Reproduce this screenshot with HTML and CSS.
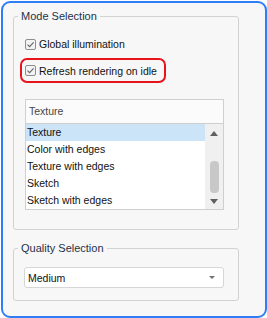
FILE: index.html
```html
<!DOCTYPE html>
<html lang="en">
<head>
    <meta charset="UTF-8">
    <title>Render Settings</title>
    <link rel="stylesheet" href="styles.css">
</head>
<body>
    <div class="panel">
        <!-- Mode selection -->
        <fieldset class="group mode-group">
            <legend>Mode Selection</legend>
            <div class="check-row">
                <svg class="check" width="11" height="11" viewBox="0 0 11 11"><rect x="0.5" y="0.5" width="10" height="10" rx="1.5" fill="#f3f3f3" stroke="#8e8e8e"/><path d="M2.5 5.6 L4.6 7.7 L8.6 3.3" fill="none" stroke="#6a6a6a" stroke-width="1.2"/></svg>
                <span>Global illumination</span>
            </div>
            <div class="check-row highlight">
                <svg class="check" width="11" height="11" viewBox="0 0 11 11"><rect x="0.5" y="0.5" width="10" height="10" rx="1.5" fill="#f3f3f3" stroke="#8e8e8e"/><path d="M2.5 5.6 L4.6 7.7 L8.6 3.3" fill="none" stroke="#6a6a6a" stroke-width="1.2"/></svg>
                <span>Refresh rendering on idle</span>
            </div>
            <div class="combo-list">
                <div class="combo-head">Texture</div>
                <div class="list-body">
                    <ul class="items">
                        <li class="selected">Texture</li>
                        <li>Color with edges</li>
                        <li>Texture with edges</li>
                        <li>Sketch</li>
                        <li>Sketch with edges</li>
                    </ul>
                    <div class="scrollbar">
                        <span class="arrow up"></span>
                        <span class="thumb"></span>
                        <span class="arrow down"></span>
                    </div>
                </div>
            </div>
        </fieldset>

        <!-- Quality selection -->
        <fieldset class="group quality-group">
            <legend>Quality Selection</legend>
            <div class="dropdown">
                <span>Medium</span>
                <span class="arrow down small"></span>
            </div>
        </fieldset>
    </div>
</body>
</html>
```

FILE: styles.css
```css
body {
    margin: 0;
    padding: 0;
    background: #fff;
    font-family: "Liberation Sans", Arial, sans-serif;
    font-size: 10.5px;
    color: #111;
}
.panel {
    margin: 1px 0 0 1px;
    width: 266px;
    height: 317px;
    box-sizing: border-box;
    border: 2px solid #2f7ef8;
    border-radius: 9px;
    background: #f7f7f7;
    padding: 6px 26px 0 10px;
}
.group {
    margin: 0;
    border: 1px solid #d2d2d2;
    border-radius: 3px;
    padding: 0;
}
.group legend {
    margin-left: 4px;
    padding: 0 3px;
    font-size: 11px;
    line-height: 14px;
    color: #25314a;
}
.mode-group {
    padding: 5px 14px 19px 0;
}
.check-row {
    display: flex;
    align-items: center;
    gap: 3px;
    height: 16px;
    padding-left: 11px;
    margin-top: 8px;
}
.check-row.highlight {
    margin: 6px 0 0 6px;
    width: 139px;
    height: 21px;
    padding-left: 3px;
    border: 2px solid #e8141c;
    border-radius: 7px;
}
.check {
    flex: none;
}
.combo-list {
    margin: 16px 0 0 11px;
    border: 1px solid #cfcfcf;
    background: #fff;
}
.combo-head {
    height: 23px;
    line-height: 23px;
    padding-left: 3px;
    background: #fbfbfb;
    border-bottom: 1px solid #cfcfcf;
    color: #444;
}
.list-body {
    display: flex;
}
.items {
    list-style: none;
    margin: 0;
    padding: 0;
    flex: 1;
}
.items li {
    height: 17px;
    line-height: 17px;
    padding-left: 1px;
}
.items li.selected {
    background: #cce4f7;
}
.scrollbar {
    width: 18px;
    background: #f0f0f0;
    display: flex;
    flex-direction: column;
    align-items: center;
    padding: 7px 0 5px;
    box-sizing: border-box;
}
.arrow {
    width: 0;
    height: 0;
    border-left: 4px solid transparent;
    border-right: 4px solid transparent;
}
.arrow.up {
    border-bottom: 5px solid #606060;
}
.arrow.down {
    border-top: 5px solid #606060;
}
.thumb {
    width: 9px;
    height: 32px;
    margin: 25px 0 6px;
    border-radius: 4px;
    background: #c8c8c8;
}
.quality-group {
    margin-top: 11px;
    padding: 12px 14px 12px 0;
}
.dropdown {
    display: flex;
    align-items: center;
    justify-content: space-between;
    height: 19px;
    margin-left: 10px;
    padding: 0 8px 0 3px;
    border: 1px solid #d6d6d6;
    border-radius: 3px;
    background: #fff;
}
.arrow.small {
    border-left-width: 3px;
    border-right-width: 3px;
    border-top: 3px solid #707070;
}
```
